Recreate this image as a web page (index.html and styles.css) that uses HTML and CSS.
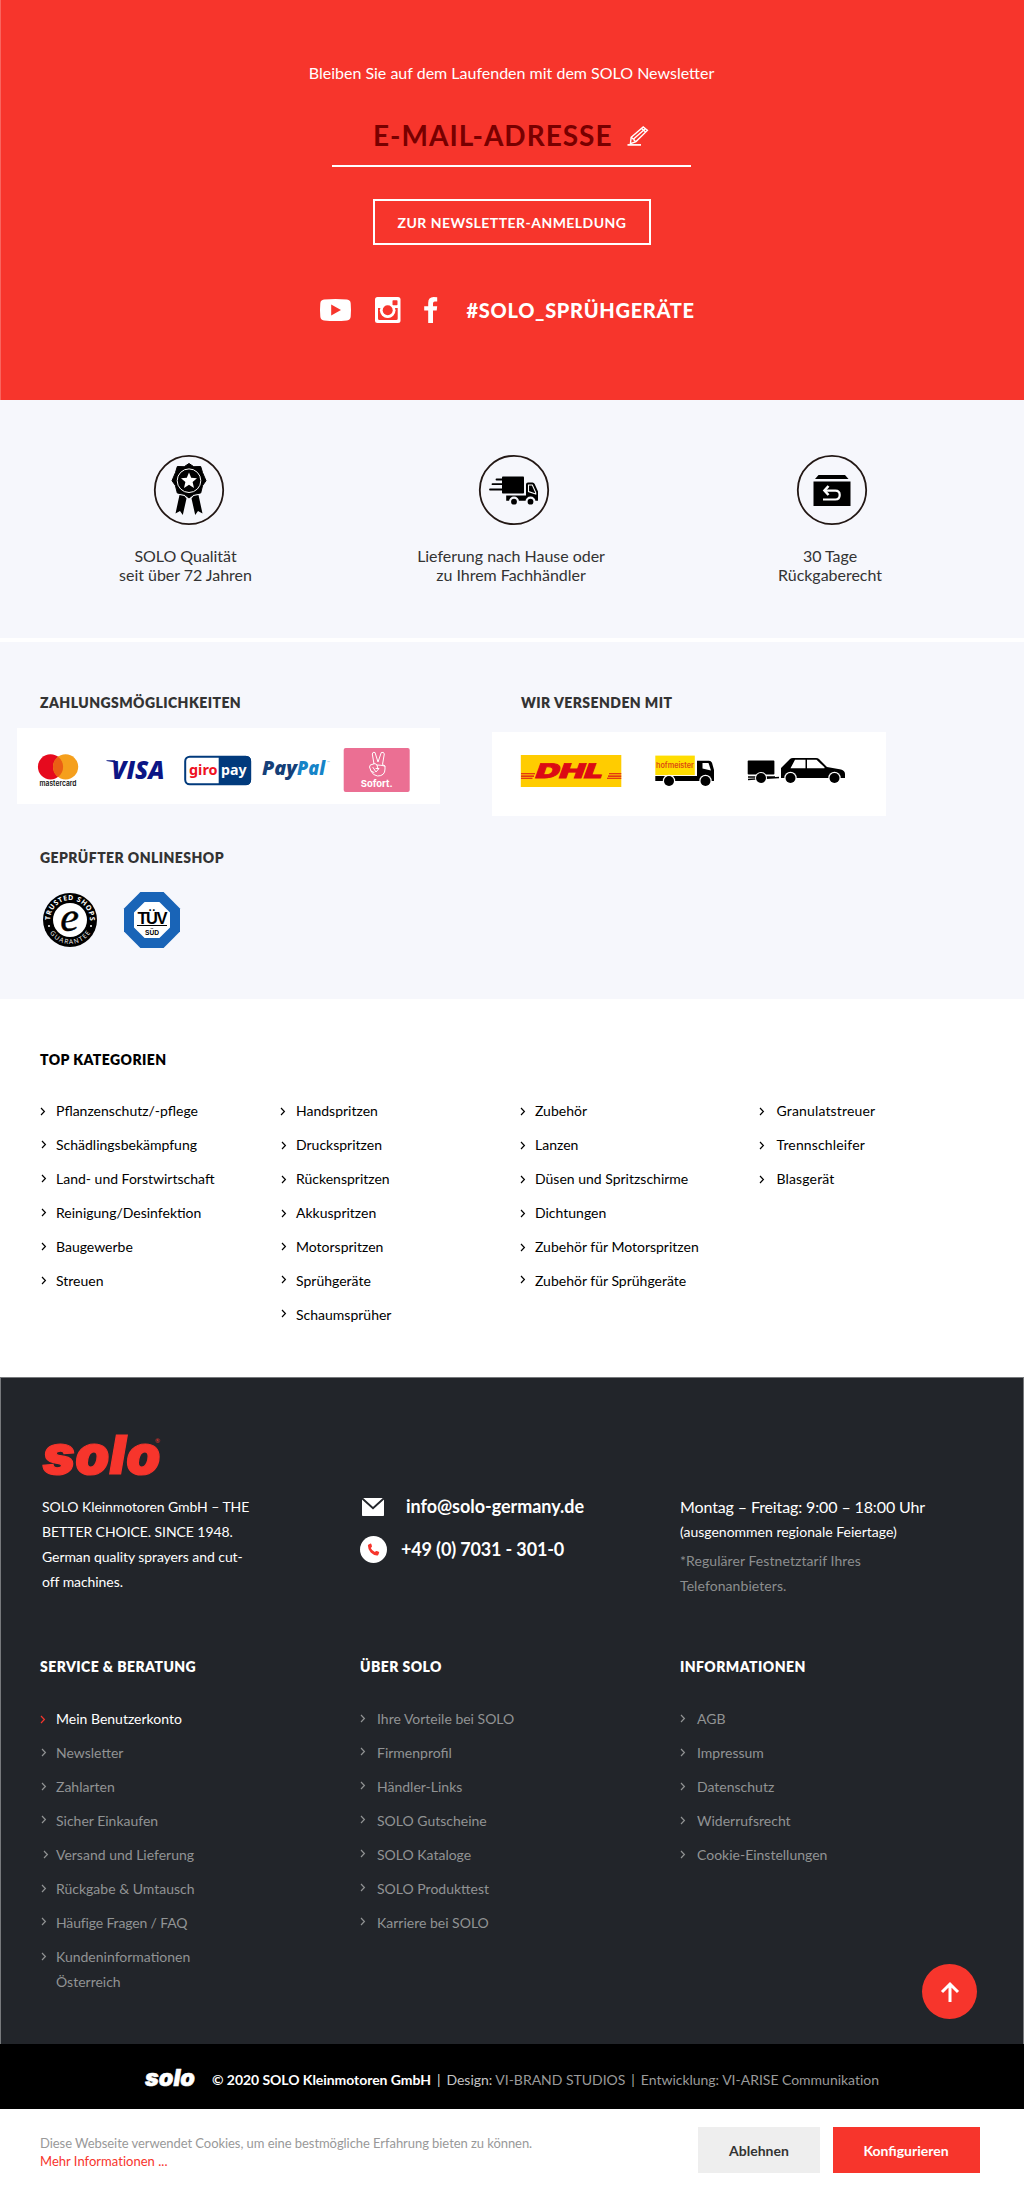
FILE: index.html
```html
<!DOCTYPE html>
<html lang="de">
<head>
<meta charset="utf-8">
<title>SOLO Kleinmotoren</title>
<link rel="stylesheet" href="styles.css">
</head>
<body>
<svg class="sprite" aria-hidden="true">
  <symbol id="chev" viewBox="0 0 6 9"><path d="M1 1 4.4 4.5 1 8" fill="none" stroke="currentColor" stroke-width="1.2"/></symbol>
</svg>

<section class="newsletter">
  <p class="intro">Bleiben Sie auf dem Laufenden mit dem SOLO Newsletter</p>
  <div class="email">
    <span>E-MAIL-ADRESSE</span>
    <svg width="22" height="20" viewBox="0 0 22 20" fill="none" stroke="#fff" stroke-width="1.4"><path d="M4.2 11.2 16.2 1 20.4 4.4 9 15.6 3.4 17.6Z"/><path d="M6.3 13.3 18 2.9M4.2 11.2 6 13 7 13.3 7.3 14.6 9 15.6M14.6 2.5 18.6 6"/><path d="M.5 18.9H14" stroke-width="1.7"/></svg>
  </div>
  <a class="subscribe">ZUR NEWSLETTER-ANMELDUNG</a>
  <div class="social">
    <svg class="yt" width="31" height="22" viewBox="0 0 31 22"><path fill="#fff" d="M4 .6Q15.500-.6 27 .6 30.500 1 30.700 4.500 31.300 11 30.700 17.500 30.500 21 27 21.400 15.500 22.600 4 21.400.5 21 .3 17.500-.3 11 .3 4.500.5 1 4 .6Z"/><path fill="#f7352c" d="M11.200 5.600 21 11 11.200 16.400Z"/></svg>
    <svg class="ig" width="26" height="26" viewBox="0 0 26 26"><rect width="25.500" height="26" rx="2.500" fill="#fff"/><path d="M3 11H6.200A7 7 0 1 0 19.300 11H22.700V21.500Q22.700 23 21.200 23H4.500Q3 23 3 21.500Z" fill="#f7352c"/><circle cx="12.700" cy="13.200" r="7.800" fill="#fff"/><circle cx="12.700" cy="13.200" r="5" fill="#f7352c"/><rect x="17.500" y="3.200" width="5" height="5" rx=".8" fill="#f7352c"/></svg>
    <svg class="fb" width="14" height="26" viewBox="0 0 14 26"><path fill="#fff" d="M13.200.2V4.500H10.800Q9 4.500 9 6.400V9.300H13.200L12.700 13.500H9V26H4.200V13.500H.2V9.300H4.200V6Q4.200.2 9.600.1Z"/></svg>
    <span>#SOLO_SPRÜHGERÄTE</span>
  </div>
</section>

<section class="usps">
  <div class="usp u1">
    <svg width="70" height="70" viewBox="0 0 70 70"><circle cx="35" cy="35" r="34.200" fill="none" stroke="#231815" stroke-width="1.800"/>
      <path d="M35 8.500 39.800 11.700 46.700 11.500 48.500 17.500 52 25.700 48.600 30.500 46.700 38 39.800 39.300 35 43 30.200 39.300 23.300 38 21.400 30.500 18 25.700 21.500 17.500 23.300 11.500 30.200 11.700Z" stroke="#000" stroke-linejoin="round"/>
      <circle cx="35" cy="25.700" r="11.800" fill="none" stroke="#fff" stroke-width="1"/>
      <path fill="#fff" d="M35 17.500 37.200 22.700 43 23.200 38.600 27 40 33 35 29.800 30 33 31.400 27 27 23.200 32.800 22.700Z"/>
      <path d="M25.500 40 30.500 41 32.500 43.500 28.800 60 26 56 21.500 58.500ZM44.500 40 39.500 41 37.500 43.500 41.200 60 44 56 48.500 58.500Z"/></svg>
    <p>SOLO Qualität<br>seit über 72 Jahren</p>
  </div>
  <div class="usp u2">
    <svg width="70" height="70" viewBox="0 0 70 70"><circle cx="35" cy="35" r="34.200" fill="none" stroke="#231815" stroke-width="1.800"/>
      <rect x="23" y="21.500" width="22" height="17" rx=".8"/>
      <path d="M17.500 24.500H23M13.500 29.200H23M11 34.500H23" stroke="#000" stroke-width="1.800" stroke-linecap="round"/>
      <path d="M27.200 40.500H47V29.500Q47 27.500 49 27.500H53.500Q55 27.500 55.700 29L59 36.500V45.800H27.200Z"/>
      <path d="M49.500 30H53.300L56.700 37.500V39L49.500 36.500Z" fill="none" stroke="#fff" stroke-width="1.100"/>
      <circle cx="35" cy="46.500" r="5" fill="#f6f7fc"/><circle cx="51.500" cy="46.500" r="5" fill="#f6f7fc"/><circle cx="35" cy="46.700" r="2.900"/><circle cx="51.500" cy="46.700" r="2.900"/></svg>
    <p>Lieferung nach Hause oder<br>zu Ihrem Fachhändler</p>
  </div>
  <div class="usp u3">
    <svg width="70" height="70" viewBox="0 0 70 70"><circle cx="35" cy="35" r="34.200" fill="none" stroke="#231815" stroke-width="1.800"/>
      <path d="M21.500 20H48L51.500 24H18Z"/><rect x="16.500" y="26.500" width="37" height="24.500"/>
      <path d="M28 35.600H38.300Q42.700 35.600 42.700 40 42.700 44.500 38.300 44.500H26" fill="none" stroke="#fff" stroke-width="2.200"/><path d="M31.500 31 27.500 35.500 31.500 40" fill="none" stroke="#fff" stroke-width="2.600"/></svg>
    <p>30 Tage<br>Rückgaberecht</p>
  </div>
</section>

<section class="trust">
  <div class="pay">
    <h2>ZAHLUNGSMÖGLICHKEITEN</h2>
    <svg class="paylogos" width="423" height="76" viewBox="0 0 423 76">
      <rect width="423" height="76" fill="#fff"/>
      <circle cx="33.500" cy="38.800" r="12.600" fill="#e60a1e"/><circle cx="48.600" cy="38.800" r="12.600" fill="#f59f1c"/><path d="M41.050 28.700A12.600 12.600 0 0 1 41.050 48.900 12.600 12.600 0 0 1 41.050 28.700Z" fill="#ea5f14"/>
      <text x="22.500" y="57.500" class="mc" textLength="37" lengthAdjust="spacingAndGlyphs">mastercard</text>
      <text x="94.500" y="51" class="visa" textLength="53" lengthAdjust="spacingAndGlyphs">VISA</text><path d="M89.500 32.200H98L100.500 36Q96 33.200 89.500 32.900Z" fill="#0a1480"/>
      <rect x="168.200" y="28.700" width="65" height="27.600" rx="4.500" fill="#fff" stroke="#013a7c" stroke-width="2"/><path d="M201.700 28H229Q234 28 234 33V52Q234 57 229 57H201.700Z" fill="#013a7c"/>
      <text x="172" y="46.500" class="giro" textLength="28.500" lengthAdjust="spacingAndGlyphs">giro</text>
      <text x="204" y="46.500" class="gpay" textLength="25.500" lengthAdjust="spacingAndGlyphs">pay</text>
      <text x="245" y="46.700" class="pp1" textLength="35" lengthAdjust="spacingAndGlyphs">Pay</text>
      <text x="280" y="46.700" class="pp2" textLength="28" lengthAdjust="spacingAndGlyphs">Pal</text>
      <text x="310" y="36" class="tm">™</text>
      <rect x="326.700" y="20" width="66" height="44" rx="2" fill="#eb6f93"/>
      <g fill="none" stroke="#fff" stroke-width="1" stroke-linejoin="round" stroke-linecap="round"><path d="M357 36 355.300 26Q355.600 23.500 358 24.500L361 34 364.300 24.500Q367 23.600 367.300 26L365.500 36.500 368 38V41Q368 48 360.500 48 356 47.500 354 43L352.500 39Q353 36 355 36.500Q358 34 360 37L361 41"/><path d="M354 43 357 44.500M360 37Q364 37 367.800 38M356 39.500 359 44 362 40.500H359"/></g>
      <text x="343.700" y="59.300" class="sofort" textLength="32" lengthAdjust="spacingAndGlyphs">Sofort.</text>
    </svg>
  </div>
  <div class="ship">
    <h2>WIR VERSENDEN MIT</h2>
    <svg class="shiplogos" width="394" height="84" viewBox="0 0 394 84">
      <rect width="394" height="84" fill="#fff"/>
      <rect x="28.800" y="23" width="100.500" height="32" fill="#fc0"/>
      <path d="M29 41.800H43M29 44.100H42M29 46.300H40.500M117 41.800H129.300M116 44.100H129.300M115 46.300H129.300" stroke="#dc0a14" stroke-width="1.100"/>
      <text transform="translate(42 46) skewX(-20)" class="dhl" textLength="67" lengthAdjust="spacingAndGlyphs">DHL</text>
      <rect x="163.300" y="23.600" width="39.500" height="19.500" fill="#fd0"/>
      <text x="164" y="36" class="hof" textLength="38" lengthAdjust="spacingAndGlyphs">hofmeister</text>
      <path d="M205 28.700H217Q219 28.700 220 30.700L222 38V49H163.300V44H205Z"/><path d="M210.500 31H216.500L219 38.500 210.500 36.500Z" fill="#fff"/>
      <circle cx="177" cy="49" r="6.200" fill="#fff"/><circle cx="213.500" cy="49" r="6.200" fill="#fff"/><circle cx="177" cy="49" r="5"/><circle cx="213.500" cy="49" r="5"/>
      <rect x="255.700" y="28.600" width="26.700" height="14" rx=".8"/><path d="M256 45H283M256 47.500 287 45.500" stroke="#000" stroke-width="1.300"/>
      <path d="M289 46V36L298 27Q299 26 301 26H324Q326 26 327 27L335 35 349 37.500Q353 38.500 353 42V46Z"/><path d="M303 27.800H313.500V36.300H298.500ZM315 27.800H324.500L332.500 35.300V36.300H315Z" fill="#fff"/>
      <circle cx="269" cy="46" r="6" fill="#fff"/><circle cx="269" cy="46" r="5"/><circle cx="298.500" cy="46" r="6.200" fill="#fff"/><circle cx="298.500" cy="46" r="5"/><circle cx="342.500" cy="46" r="6.200" fill="#fff"/><circle cx="342.500" cy="46" r="5"/>
    </svg>
  </div>
  <div class="shop">
    <h2>GEPRÜFTER ONLINESHOP</h2>
    <div class="seals">
      <svg width="56" height="56" viewBox="0 0 56 56"><circle cx="28" cy="28" r="27"/><circle cx="28" cy="28" r="17" fill="#fff"/>
        <path id="arcT" d="M8.760 33.160A19.920 19.920 0 1 1 47.240 33.160" fill="none"/><path id="arcB" d="M4.820 34.210A24 24 0 0 0 51.180 34.210" fill="none"/>
        <text class="ring"><textPath href="#arcT" startOffset="5" textLength="63">TRUSTED SHOPS</textPath></text>
        <text class="ring thin"><textPath href="#arcB" startOffset="7.500" textLength="48">GUARANTEE</textPath></text>
        <circle cx="7" cy="34" r="1" fill="#fff"/><circle cx="49" cy="34" r="1" fill="#fff"/>
        <text x="27.500" y="38.500" class="e">e</text></svg>
      <svg width="56" height="56" viewBox="0 0 56 56"><path d="M16.400 0H39.600L56 16.400V39.600L39.600 56H16.400L0 39.600V16.400Z" fill="#1964b7"/><path d="M20.600 10H35.400L46 20.600V35.400L35.400 46H20.600L10 35.400V20.600Z" fill="#fff"/>
        <text x="13.500" y="31.700" class="tuv" textLength="29">TÜV</text><rect x="13" y="33" width="30" height="1"/><text x="21" y="43" class="sud" textLength="14" lengthAdjust="spacingAndGlyphs">SÜD</text></svg>
    </div>
  </div>
</section>

<section class="cats">
  <h2>TOP KATEGORIEN</h2>
  <div class="catgrid">
    <ul>
      <li class="l1"><svg><use href="#chev"/></svg>Pflanzenschutz/-pflege</li>
      <li><svg><use href="#chev"/></svg>Schädlingsbekämpfung</li>
      <li><svg><use href="#chev"/></svg>Land- und Forstwirtschaft</li>
      <li><svg><use href="#chev"/></svg>Reinigung/Desinfektion</li>
      <li><svg><use href="#chev"/></svg>Baugewerbe</li>
      <li><svg><use href="#chev"/></svg>Streuen</li>
    </ul>
    <ul>
      <li class="l1"><svg><use href="#chev"/></svg>Handspritzen</li>
      <li class="d1"><svg><use href="#chev"/></svg>Druckspritzen</li>
      <li class="d1"><svg><use href="#chev"/></svg>Rückenspritzen</li>
      <li class="d1"><svg><use href="#chev"/></svg>Akkuspritzen</li>
      <li><svg><use href="#chev"/></svg>Motorspritzen</li>
      <li class="up"><svg><use href="#chev"/></svg>Sprühgeräte</li>
      <li class="up"><svg><use href="#chev"/></svg>Schaumsprüher</li>
    </ul>
    <ul class="tight">
      <li class="d1"><svg><use href="#chev"/></svg>Zubehör</li>
      <li class="d1"><svg><use href="#chev"/></svg>Lanzen</li>
      <li class="d1"><svg><use href="#chev"/></svg>Düsen und Spritzschirme</li>
      <li class="d1"><svg><use href="#chev"/></svg>Dichtungen</li>
      <li class="d1"><svg><use href="#chev"/></svg>Zubehör für Motorspritzen</li>
      <li class="up"><svg><use href="#chev"/></svg>Zubehör für Sprühgeräte</li>
    </ul>
    <ul class="wide">
      <li class="d1"><svg><use href="#chev"/></svg>Granulatstreuer</li>
      <li class="d1"><svg><use href="#chev"/></svg>Trennschleifer</li>
      <li class="d1"><svg><use href="#chev"/></svg>Blasgerät</li>
    </ul>
  </div>
</section>

<footer class="footer">
  <svg class="logo" width="122" height="44" viewBox="0 0 122 44"><text x="1.500" y="41" class="solo" textLength="118" lengthAdjust="spacingAndGlyphs">solo</text><text x="114" y="10" class="reg">®</text></svg>
  <div class="fgrid top">
    <p class="about">SOLO Kleinmotoren GmbH – THE BETTER CHOICE. SINCE 1948. German quality sprayers and cut-off machines.</p>
    <div class="contact">
      <div class="mail"><svg width="22" height="18" viewBox="0 0 22 18"><rect width="22" height="18" rx=".8" fill="#fff"/><path d="M0 .2 11 10.200 22 .2" fill="none" stroke="#22252a" stroke-width="1.900"/></svg><span>info@solo-germany.de</span></div>
      <div class="phone"><svg width="27" height="27" viewBox="0 0 27 27"><circle cx="13.500" cy="13.500" r="13.500" fill="#fff"/><path fill="#f7352c" d="M8.200 8.700 10.500 7.600Q11.200 7.500 11.400 8.200L12 10.200Q12 10.800 11.500 11.200L10.800 11.900Q11.900 14.700 14.900 16L15.700 15.300Q16.200 14.900 16.800 15L18.700 15.700Q19.300 16 19.200 16.600L18.200 18.900Q17.800 19.500 17 19.500 13.500 19.400 10.700 16.600 7.900 13.400 7.900 9.600 7.900 9 8.200 8.700Z"/></svg><span>+49 (0) 7031 - 301-0</span></div>
    </div>
    <div class="hours">
      <p class="big">Montag – Freitag: 9:00 – 18:00 Uhr</p>
      <p>(ausgenommen regionale Feiertage)</p>
      <p class="note">*Regulärer Festnetztarif Ihres Telefonanbieters.</p>
    </div>
  </div>
  <div class="fgrid links">
    <div>
      <h2>SERVICE &amp; BERATUNG</h2>
      <ul>
        <li class="active l1"><svg><use href="#chev"/></svg>Mein Benutzerkonto</li>
        <li><svg><use href="#chev"/></svg>Newsletter</li>
        <li><svg><use href="#chev"/></svg>Zahlarten</li>
        <li class="up"><svg><use href="#chev"/></svg>Sicher Einkaufen</li>
        <li class="r2"><svg><use href="#chev"/></svg>Versand und Lieferung</li>
        <li><svg><use href="#chev"/></svg>Rückgabe &amp; Umtausch</li>
        <li class="up snug"><svg><use href="#chev"/></svg>Häufige Fragen / FAQ</li>
        <li><svg><use href="#chev"/></svg>Kundeninformationen<br>Österreich</li>
      </ul>
    </div>
    <div>
      <h2>ÜBER SOLO</h2>
      <ul class="wide">
        <li><svg><use href="#chev"/></svg>Ihre Vorteile bei SOLO</li>
        <li class="up"><svg><use href="#chev"/></svg>Firmenprofil</li>
        <li class="up"><svg><use href="#chev"/></svg>Händler-Links</li>
        <li class="up"><svg><use href="#chev"/></svg>SOLO Gutscheine</li>
        <li class="up"><svg><use href="#chev"/></svg>SOLO Kataloge</li>
        <li class="up"><svg><use href="#chev"/></svg>SOLO Produkttest</li>
        <li class="up"><svg><use href="#chev"/></svg>Karriere bei SOLO</li>
      </ul>
    </div>
    <div>
      <h2>INFORMATIONEN</h2>
      <ul class="wide">
        <li><svg><use href="#chev"/></svg>AGB</li>
        <li><svg><use href="#chev"/></svg>Impressum</li>
        <li><svg><use href="#chev"/></svg>Datenschutz</li>
        <li><svg><use href="#chev"/></svg>Widerrufsrecht</li>
        <li><svg><use href="#chev"/></svg>Cookie-Einstellungen</li>
      </ul>
    </div>
  </div>
  <a class="totop"><svg width="20" height="22" viewBox="0 0 20 22"><path d="M10 21V3.500M2 11 10 3 18 11" fill="none" stroke="#fff" stroke-width="3"/></svg></a>
</footer>

<div class="legal">
  <svg width="52" height="20" viewBox="0 0 52 20"><text x="0" y="17.800" class="solo small" textLength="50" lengthAdjust="spacingAndGlyphs">solo</text></svg>
  <p><b>© 2020 SOLO Kleinmotoren GmbH</b><i>|</i><span class="design"><em>Design:</em> VI-BRAND STUDIOS</span><i>|</i>Entwicklung: VI-ARISE Communikation</p>
</div>

<div class="cookie">
  <p>Diese Webseite verwendet Cookies, um eine bestmögliche Erfahrung bieten zu können.<br><a>Mehr Informationen ...</a></p>
  <a class="btn decline">Ablehnen</a>
  <a class="btn config">Konfigurieren</a>
</div>
</body>
</html>
```
FILE: styles.css
```css
* { box-sizing: border-box; }
body { margin: 0; width: 1024px; background: #fff; font: 14px/25px Lato, sans-serif; color: #000; }
p, h2, ul { margin: 0; padding: 0; }
svg { display: block; flex: none; overflow: visible; }
.sprite { width: 0; height: 0; position: absolute; }
h2 { font-size: 14px; font-weight: 800; letter-spacing: .43px; line-height: 25px; }

.newsletter { height: 400px; background: #f7352c; border-left: 1px solid #f9655e; color: #fff; display: flex; flex-direction: column; align-items: center; padding-top: 59px; }
.intro { font-size: 16px; line-height: 27px; margin-right: 2px; }
.email { width: 359px; height: 47px; margin-top: 34px; margin-right: 2px; padding-left: 41px; display: flex; gap: 14px; font-size: 28px; line-height: 30px; font-weight: 700; letter-spacing: 1px; color: #780000; border-bottom: 2px solid #fff; }
.email svg { margin-top: 6px; }
.subscribe { width: 278px; height: 46px; margin-top: 32px; margin-right: 1px; border: 2px solid #fff; text-align: center; line-height: 43px; font-weight: 700; letter-spacing: .46px; }
.social { width: 384px; height: 26px; margin-top: 52px; margin-right: 2px; display: flex; align-items: center; }
.ig { margin-left: 24px; }
.fb { margin-left: 23px; }
.social span { margin-left: 29px; font-size: 20px; font-weight: 900; letter-spacing: .7px; white-space: nowrap; }

.usps { height: 238px; margin-bottom: 4px; padding-top: 55px; background: #f6f7fc; display: flex; color: #333; font-size: 16px; line-height: 19px; text-align: center; }
.usp { display: flex; flex-direction: column; align-items: center; flex: none; }
.usp p { margin-top: 21px; margin-right: 1px; letter-spacing: -.03px; }
.u1 { width: 372px; }
.u1 svg, .u2 svg { margin-left: 5px; }
.u2 { width: 279px; }
.u3 { width: 359px; }
.u3 svg { margin-left: 3px; }

.trust { height: 357px; padding-left: 40px; padding-top: 48px; background: #f6f7fc; color: #333; display: grid; grid-template-columns: 481px 1fr; grid-template-rows: 155px 1fr; }
.paylogos { margin: 13px 0 0 -23px; }
.shiplogos { margin: 17px 0 0 -29px; }
.seals { display: flex; gap: 26px; margin: 22px 0 0 2px; }
.mc { font: 600 7.5px Inter, sans-serif; fill: #111; }
.visa { font: italic 900 25px "Open Sans", sans-serif; fill: #0b1585; }
.giro, .gpay { font: 700 15px "Noto Sans", sans-serif; }
.giro { fill: #ee1122; }
.gpay { fill: #fff; }
.pp1, .pp2 { font: italic 800 19px "Open Sans", sans-serif; fill: #143f78; }
.pp2 { fill: #1584c8; }
.tm { font: 4px Lato, sans-serif; fill: #6ab5de; }
.sofort { font: 700 9.5px Inter, sans-serif; fill: #fff; }
.dhl { font: 900 20px Inter, sans-serif; fill: #dc0a14; stroke: #dc0a14; stroke-width: .8px; }
.hof { font: 600 7.5px Inter, sans-serif; fill: #dd4a10; }
.ring { font: 700 7px "Open Sans", sans-serif; fill: #fff; }
.thin { font-weight: 400; font-size: 6.5px; }
.e { font: italic 400 42px "Liberation Serif", serif; text-anchor: middle; stroke: #000; stroke-width: .5px; }
.tuv { font: 700 16.5px "Liberation Sans", sans-serif; letter-spacing: -1px; }
.sud { font: 700 8px "Liberation Sans", sans-serif; }

.cats { height: 378px; padding: 48px 0 0 40px; }
.catgrid { display: grid; grid-template-columns: repeat(4, 240px); margin-top: 26px; }
ul { list-style: none; }
li { --x: 1px; --y: 8px; padding-left: 16px; margin-bottom: 9px; position: relative; white-space: nowrap; }
li svg { position: absolute; left: var(--x); top: var(--y); width: 6px; height: 9px; }
.l1 { --x: 0px; --y: 9px; }
.d1 { --y: 9px; }
.up { --y: 7px; }
.r2 { --x: 3px; }
.snug { letter-spacing: -.15px; }
.tight li { --x: 0px; padding-left: 15px; }
.catgrid .wide li { --x: -1px; padding-left: 16.500px; letter-spacing: .15px; }

.footer { position: relative; height: 667px; background: #22252a; border: 1px solid #77797c; border-bottom: 0; color: #fff; padding: 55px 0 0 39px; }
.logo { margin-left: 1px; }
.solo { font: italic 900 54px Inter, sans-serif; fill: #f7352c; stroke: #f7352c; stroke-width: 1.200px; }
.small { font-size: 23px; fill: #fff; stroke: #fff; stroke-width: .5px; }
.reg { font: 6px Lato, sans-serif; fill: #f7352c; }
.fgrid { display: grid; grid-template-columns: repeat(3, 320px); }
.top { height: 177px; padding-top: 17px; }
.about { width: 215px; padding-left: 2px; letter-spacing: -.07px; }
.contact { font-size: 18px; font-weight: 700; letter-spacing: -.04px; }
.mail { display: flex; align-items: center; gap: 22px; padding-left: 2px; height: 25px; }
.phone { display: flex; align-items: center; gap: 14px; height: 27px; margin-top: 17px; letter-spacing: -.15px; }
.big { font-size: 16px; letter-spacing: -.12px; }
.note { width: 200px; color: #8c8e8f; margin-top: 4px; letter-spacing: .08px; }
.links { color: #919394; }
.links h2 { color: #fff; margin-bottom: 27px; }
.links .wide li { --x: 0px; padding-left: 17px; }
.links .active { color: #fff; }
.active svg { color: #f7352c; }
.totop { position: absolute; left: 921px; top: 586px; width: 55px; height: 55px; border-radius: 50%; background: #f7352c; display: flex; align-items: center; justify-content: center; }

.legal { height: 65px; background: #000; color: #9a9a9a; display: flex; align-items: flex-start; padding: 23px 0 0 145px; gap: 15px; }
.legal p { white-space: nowrap; letter-spacing: -.02px; }
.legal svg { margin-top: 1px; }
.legal b { color: #fff; font-weight: 700; letter-spacing: -.05px; }
.legal i { font-style: normal; margin: 0 6px; color: #aaa; }
.legal em { font-style: normal; color: #c4c4c4; }
.legal i:first-of-type { color: #ddd; }

.cookie { height: 81px; display: flex; padding: 18px 0 0 40px; }
.cookie p { width: 658px; padding-top: 7px; font-size: 13px; line-height: 18px; letter-spacing: -.06px; color: #999; }
.cookie p a { color: #f7352c; letter-spacing: .02px; }
.btn { height: 46px; line-height: 47px; text-align: center; font-weight: 700; }
.decline { width: 122px; background: #eee; color: #333; }
.config { width: 147px; margin-left: 13px; background: #f7352c; color: #fff; padding-right: 1px; }
```
